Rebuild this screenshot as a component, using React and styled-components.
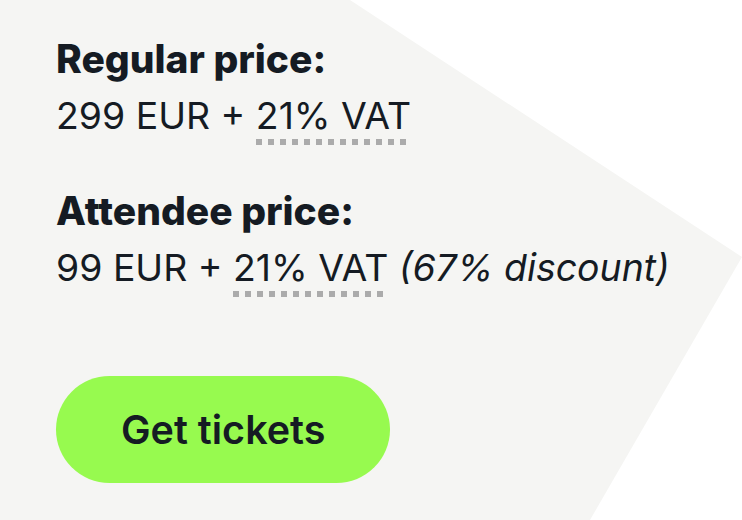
import styled, { createGlobalStyle } from "styled-components";

const GlobalStyle = createGlobalStyle`
  html, body {
    margin: 0;
    padding: 0;
    background: #fff;
  }

  body {
    font-family: Inter, "Noto Sans", "Liberation Sans", sans-serif;
    color: #151b23;
  }
`;

export default function App() {
  return (
    <>
      <GlobalStyle />
      <Panel>
        <PriceBlock>
          <Label>Regular price:</Label>
          <Amount>
            299 EUR + <Vat title="Value added tax">21% VAT</Vat>
          </Amount>
        </PriceBlock>
        <PriceBlock>
          <Label>Attendee price:</Label>
          <Amount>
            99 EUR + <Vat title="Value added tax">21% VAT</Vat>{" "}
            <Discount>(67% discount)</Discount>
          </Amount>
        </PriceBlock>
        <TicketButton type="button">Get tickets</TicketButton>
      </Panel>
    </>
  );
}

const Panel = styled.section`
  box-sizing: border-box;
  width: 742px;
  height: 520px;
  padding: 30px 0 0 56px;
  background-color: #f5f5f3;
  clip-path: polygon(0 0, 350px 0, 742px 257px, 590px 520px, 0 520px);
  display: flex;
  flex-direction: column;
  align-items: flex-start;
`;

const PriceBlock = styled.div`
  margin-bottom: 38px;

  &:last-of-type {
    margin-bottom: 80px;
  }
`;

const Label = styled.h3`
  margin: 0;
  font-size: 39px;
  line-height: 57px;
  font-weight: 800;
  letter-spacing: 0;
`;

const Amount = styled.p`
  margin: 0;
  font-size: 37.4px;
  line-height: 57px;
  font-weight: 400;
  white-space: nowrap;
`;

const Vat = styled.span`
  padding-bottom: 7px;
  background-image: linear-gradient(to right, #ababab 0 6px, transparent 6px 12px);
  background-size: 12px 6px;
  background-repeat: repeat-x;
  background-position: left bottom;
  cursor: help;
`;

const Discount = styled.em`
  font-style: italic;
`;

const TicketButton = styled.button`
  height: 107px;
  padding: 0 65px;
  border: none;
  border-radius: 54px;
  background-color: #97fa4f;
  color: #151b23;
  font-family: inherit;
  font-size: 39.5px;
  font-weight: 600;
  cursor: pointer;
`;
